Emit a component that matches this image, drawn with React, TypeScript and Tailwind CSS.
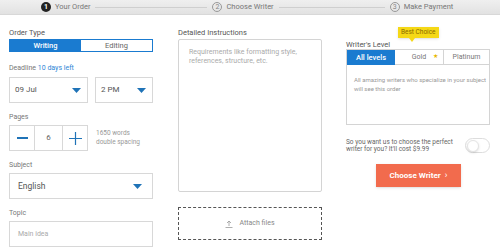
import React from "react";

const Caret = () => (
  <svg width="9" height="5" viewBox="0 0 9 5"><path d="M0 0 L9 0 L4.5 5 Z" fill="#1f73b7" /></svg>
);

function Step({ n, label, active }: { n: number; label: string; active?: boolean }) {
  return (
    <div className="flex items-center gap-[4px]">
      <div
        className={
          active
            ? "w-[10px] h-[10px] rounded-full bg-[#222] text-white text-[7px] leading-[10px] text-center font-bold"
            : "w-[10px] h-[10px] rounded-full border border-[#999] text-[#888] text-[7px] leading-[8px] text-center"
        }
      >
        {n}
      </div>
      <span className="text-[7.5px] text-[#777]">{label}</span>
    </div>
  );
}

export default function App() {
  return (
    <div className="w-[500px] h-[250px] bg-white overflow-hidden" style={{ fontFamily: "Roboto, 'Liberation Sans', sans-serif" }}>
      <div className="h-[15px] bg-gradient-to-b from-[#efefef] to-[#e2e2e2] border-b border-[#d8d8d8] flex items-center pl-[41px]">
        <Step n={1} label="Your Order" active />
        <div className="w-[112px] h-px bg-[#cfcfcf] mx-[5px]" />
        <Step n={2} label="Choose Writer" />
        <div className="w-[106px] h-px bg-[#cfcfcf] mx-[5px]" />
        <Step n={3} label="Make Payment" />
      </div>

      <div className="flex pl-[9px]">
        {/* left column */}
        <div className="w-[144px] flex flex-col pt-[13px]">
          <div className="text-[7.5px] leading-[9px] text-[#555]">Order Type</div>
          <div className="mt-[2px] flex h-[13px] border border-[#1a7bd0]">
            <div className="flex-1 bg-[#1a7bd0] text-white text-[7.5px] font-medium flex items-center justify-center">Writing</div>
            <div className="flex-1 bg-white text-[#666] text-[7.5px] flex items-center justify-center">Editing</div>
          </div>

          <div className="mt-[12px] text-[7px] leading-[9px] text-[#777]">
            Deadline <span className="text-[#2f86d6]">10 days left</span>
          </div>
          <div className="mt-[4px] flex gap-[7px]">
            <div className="w-[79px] h-[26px] border border-[#d8d8d8] flex items-center justify-between pl-[5px] pr-[6px]">
              <span className="text-[8px] text-[#555]">09 Jul</span>
              <Caret />
            </div>
            <div className="flex-1 h-[26px] border border-[#d8d8d8] flex items-center justify-between pl-[5px] pr-[6px]">
              <span className="text-[8px] text-[#555]">2 PM</span>
              <Caret />
            </div>
          </div>

          <div className="mt-[10px] text-[7px] leading-[9px] text-[#777]">Pages</div>
          <div className="mt-[3px] flex items-center gap-[8px]">
            <div className="w-[79px] h-[26px] border border-[#d8d8d8] flex">
              <div className="w-[25px] flex items-center justify-center border-r border-[#d8d8d8]">
                <div className="w-[11px] h-[1.3px] bg-[#1f73b7]" />
              </div>
              <div className="w-[28px] flex items-center justify-center border-r border-[#d8d8d8] text-[8px] text-[#666]">6</div>
              <div className="flex-1 flex items-center justify-center">
                <svg width="13" height="13" viewBox="0 0 13 13"><path d="M6.5 0 V13 M0 6.5 H13" stroke="#1f73b7" strokeWidth="1.2" /></svg>
              </div>
            </div>
            <div className="text-[6.5px] leading-[9px] text-[#999]">
              1650 words<br />double spacing
            </div>
          </div>

          <div className="mt-[10px] text-[7px] leading-[9px] text-[#777]">Subject</div>
          <div className="mt-[3px] h-[26px] border border-[#d8d8d8] flex items-center justify-between pl-[8px] pr-[10px]">
            <span className="text-[8.5px] text-[#555]">English</span>
            <Caret />
          </div>

          <div className="mt-[10px] text-[7px] leading-[9px] text-[#777]">Topic</div>
          <div className="mt-[3px] h-[26px] border border-[#d8d8d8] flex items-center pl-[8px]">
            <span className="text-[7px] text-[#aaa]">Main idea</span>
          </div>
        </div>

        {/* middle column */}
        <div className="w-[144px] ml-[25px] flex flex-col pt-[13px]">
          <div className="text-[7.5px] leading-[9px] text-[#555]">Detailed Instructions</div>
          <div className="mt-[2px] h-[153px] border border-[#d4d4d4] rounded-[2px] px-[10px] pt-[8px]">
            <div className="text-[7px] leading-[9px] text-[#aaa]">
              Requirements like formatting style,<br />references, structure, etc.
            </div>
          </div>
          <div className="mt-[15px] h-[33px] border border-dashed border-[#555] flex items-center justify-center gap-[6px]">
            <svg width="8" height="8" viewBox="0 0 8 8"><path d="M4 6 V1 M2 3 L4 1 L6 3 M0.5 7.5 H7.5" stroke="#999" strokeWidth="0.8" fill="none" /></svg>
            <span className="text-[7px] text-[#888]">Attach files</span>
          </div>
        </div>

        {/* right column */}
        <div className="w-[144px] ml-[24px] flex flex-col pt-[25px] relative">
          <div className="absolute left-[52px] top-[12px] bg-[#f5d816] text-[#8a6b00] text-[6.5px] leading-[11px] px-[3px] shadow-sm">
            Best Choice
            <div className="absolute left-[11px] top-[11px] w-0 h-0 border-l-[3px] border-r-[3px] border-t-[4px] border-l-transparent border-r-transparent border-t-[#f5d816]" />
          </div>
          <div className="text-[7.5px] leading-[9px] text-[#555]">Writer's Level</div>
          <div className="h-[76px] border border-[#d4d4d4] flex flex-col">
            <div className="flex h-[15px]">
              <div className="w-[48px] bg-[#1a7bd0] text-white text-[7.5px] font-medium flex items-center justify-center">All levels</div>
              <div className="w-[49px] border-r border-b border-[#d4d4d4] text-[#777] text-[7px] flex items-center justify-center relative">
                Gold
                <span className="absolute right-[5px] top-[1px] text-[#e8b800] text-[6px]">★</span>
              </div>
              <div className="flex-1 border-b border-[#d4d4d4] text-[#777] text-[7px] flex items-center justify-center">Platinum</div>
            </div>
            <div className="px-[7px] pt-[10px] text-[6px] leading-[9px] text-[#999] whitespace-nowrap">
              All amazing writers who specialize in your subject<br />will see this order
            </div>
          </div>
          <div className="mt-[13px] flex items-center justify-between">
            <div className="text-[6.5px] leading-[7px] text-[#666]">
              So you want us to choose the perfect<br />writer for you? It'll cost $9.99
            </div>
            <div className="w-[25px] h-[15px] rounded-full border border-[#ddd] bg-white flex items-center pl-[1px]">
              <div className="w-[12px] h-[12px] rounded-full bg-white border border-[#e4e4e4] shadow-sm" />
            </div>
          </div>
          <div className="mt-[11px] self-center ml-[1px] w-[85px] h-[23px] bg-[#f26b4d] flex items-center justify-center gap-[4px] shadow-sm">
            <span className="text-white text-[8px] font-bold">Choose Writer</span>
            <span className="text-white text-[9px]">›</span>
          </div>
        </div>
      </div>
    </div>
  );
}
